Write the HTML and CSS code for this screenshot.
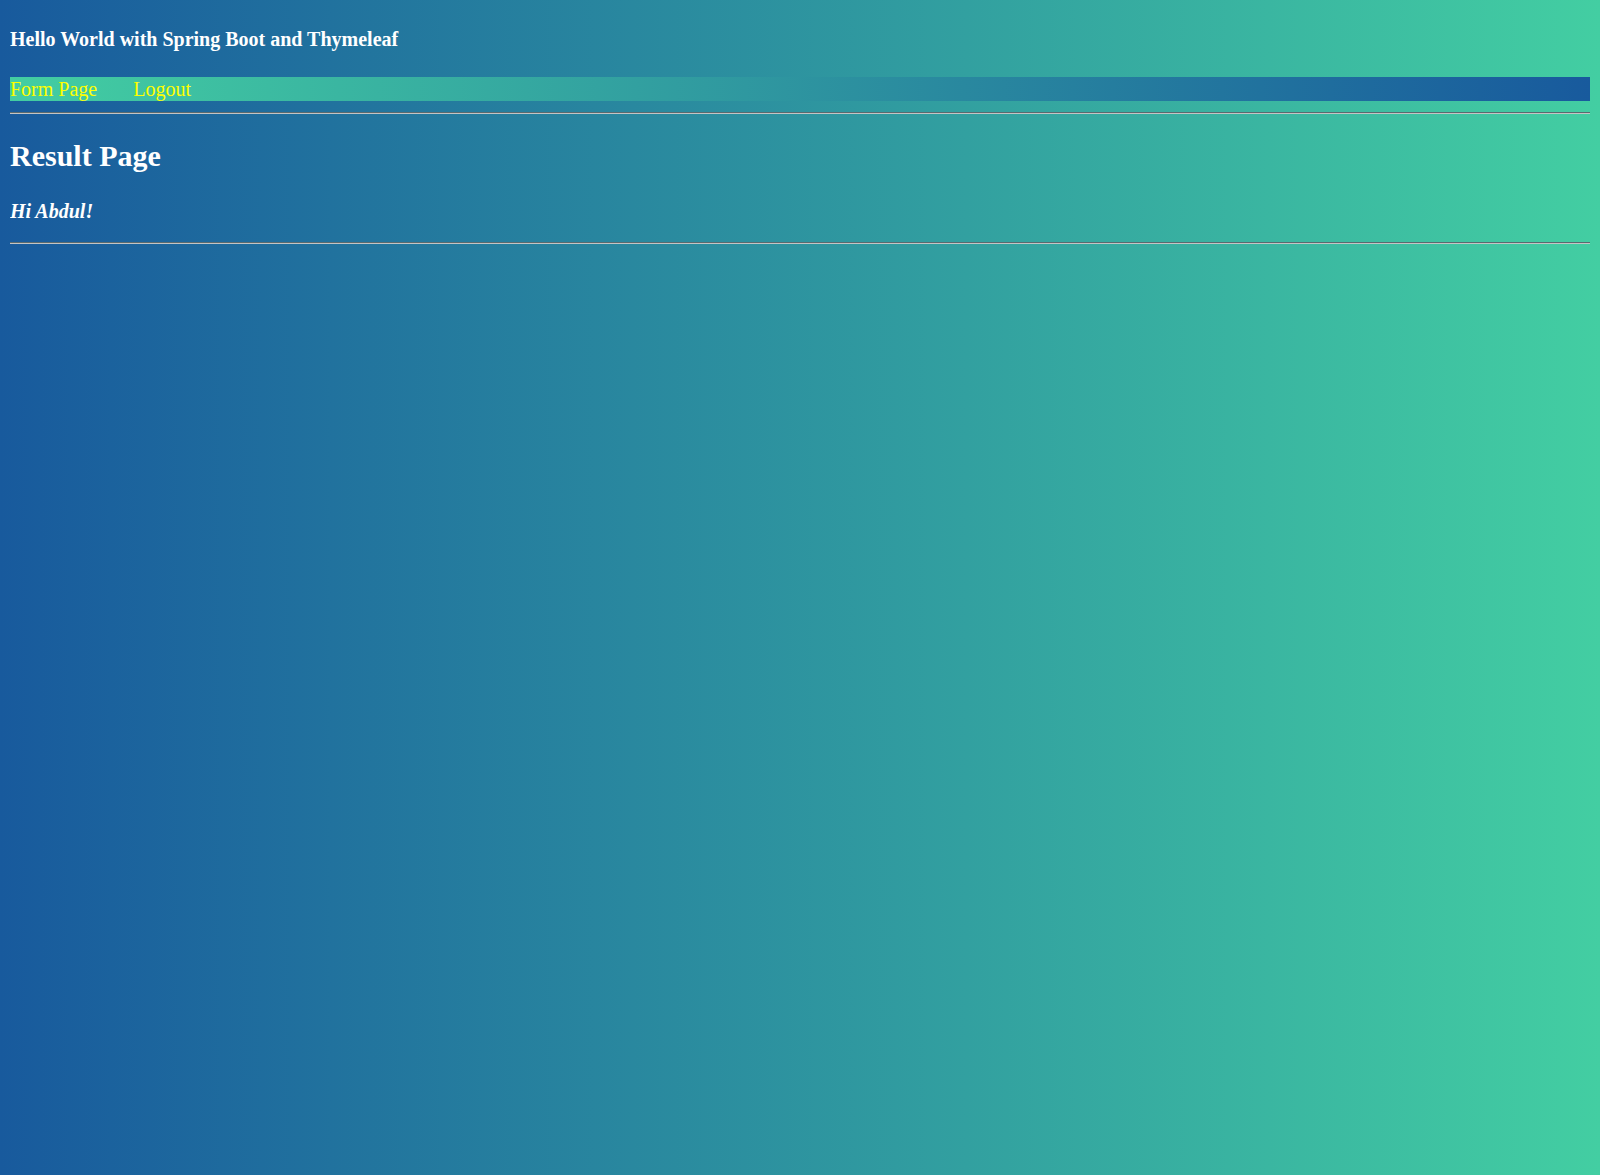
FILE: index.html
```html
<!DOCTYPE html>
<html lang="en">
<head>
<meta charset="utf-8">
<title>Result Page</title>
<link rel="stylesheet" href="styles.css">
</head>
<body>
<header class="site-header">
  <h4 class="site-title">Hello World with Spring Boot and Thymeleaf</h4>
  <nav class="nav-bar">
    <a class="nav-link" href="#">Form Page</a>
    <a class="nav-link" href="#">Logout</a>
  </nav>
  <hr class="rule">
</header>
<main class="content">
  <h2 class="page-title">Result Page</h2>
  <h4 class="greeting">Hi Abdul!</h4>
  <hr class="rule rule-bottom">
</main>
</body>
</html>
```
FILE: styles.css
```css
html {
  min-height: 100%;
}
body {
  margin: 0 10px;
  padding: 0;
  min-height: 1175px;
  font-family: "Liberation Serif", "Times New Roman", serif;
  font-size: 20px;
  color: #ffffff;
  background: linear-gradient(to right, #185a9d, #43cea2);
}
.site-header {
  display: block;
  padding-top: 1px;
}
.site-title {
  margin: 27px 0 26px 0;
  font-size: 20px;
  font-weight: bold;
}
.nav-bar {
  display: flex;
  gap: 36px;
  height: 24px;
  line-height: 24px;
  background: linear-gradient(to right, #43cea2, #185a9d);
}
.nav-link {
  color: #ffff00;
  text-decoration: none;
  font-size: 20px;
}
.rule {
  margin: 11px 0 10px 0;
  border: 0;
  height: 0;
  border-top: 1px solid #5a6a6f;
  border-bottom: 1px solid #c4c4c4;
}
.content {
  display: block;
}
.page-title {
  margin: 25px 0 25px 0;
  font-size: 30px;
  font-weight: bold;
}
.greeting {
  margin: 27px 0 19px 0;
  font-size: 20px;
  font-weight: bold;
  font-style: italic;
}
```
